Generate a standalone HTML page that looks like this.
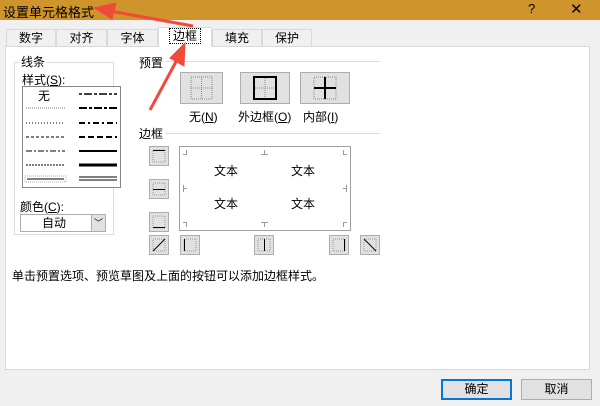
<!DOCTYPE html><html><head><meta charset="utf-8"><style>
*{margin:0;padding:0;box-sizing:border-box}
body{width:600px;height:406px;background:#f0f0f0;font-family:"Liberation Sans","Noto Sans CJK SC",sans-serif;font-size:12px;color:#000;position:relative;overflow:hidden}
.a{position:absolute}
.tab{position:absolute;top:29px;height:17px;border:1px solid #d9d9d9;border-bottom:none;background:#f0f0f0;text-align:center;line-height:16px}
.btn{position:absolute;background:#e1e1e1;border:1px solid #adadad}
.sb{position:absolute;width:20px;height:20px;background:#e1e1e1;border:1px solid #adadad}
</style></head><body>
<div class="a" style="left:0;top:0;width:600px;height:20px;background:#cf952c"></div>
<div class="a" style="left:3px;top:2px;font-size:13px">设置单元格格式</div>
<div class="a" style="left:528px;top:1px;font-size:13px">?</div>
<div class="a" style="left:570px;top:0px;font-size:15px">✕</div>
<div class="a" style="left:5px;top:46px;width:585px;height:324px;background:#fff;border:1px solid #d9d9d9"></div>
<div class="tab" style="left:6px;width:50px">数字</div>
<div class="tab" style="left:56px;width:51px">对齐</div>
<div class="tab" style="left:107px;width:51px">字体</div>
<div class="tab" style="left:158px;top:27px;height:20px;width:54px;background:#fff"><span style="border:1px dotted #000;padding:0 3px">边框</span></div>
<div class="tab" style="left:212px;width:50px">填充</div>
<div class="tab" style="left:262px;width:50px">保护</div>
<div class="a" style="left:14px;top:62px;width:100px;height:173px;border:1px solid #dcdcdc"></div>
<div class="a" style="left:20px;top:53px;background:#fff;padding:0 1px">线条</div>
<div class="a" style="left:22px;top:71px">样式(<u>S</u>):</div>
<div class="a" style="left:22px;top:86px;width:99px;height:102px;border:1px solid #828790;background:#fff"></div>
<div class="a" style="left:38px;top:87px">无</div>
<svg class="a" style="left:22px;top:86px" width="99" height="102">
<g stroke="#000">
<line x1="4" y1="22" x2="43" y2="22" stroke-dasharray="1 1" stroke="#777"/>
<line x1="4" y1="37" x2="43" y2="37" stroke-dasharray="1 2"/>
<line x1="4" y1="51" x2="43" y2="51" stroke-dasharray="3 2"/>
<line x1="4" y1="65" x2="43" y2="65" stroke-dasharray="6 2 2 2"/>
<line x1="4" y1="79" x2="43" y2="79" stroke-dasharray="2 1"/>
<rect x="3" y="90" width="41" height="6" fill="none" stroke="#aaa" stroke-dasharray="1 1"/>
<line x1="5" y1="93" x2="42" y2="93"/>
<line x1="57" y1="8" x2="95" y2="8" stroke-width="1.5" stroke-dasharray="3 2 8 2"/>
<line x1="57" y1="22" x2="95" y2="22" stroke-width="2" stroke-dasharray="8 2 3 2"/>
<line x1="57" y1="37" x2="95" y2="37" stroke-width="2" stroke-dasharray="6 3 2 3"/>
<line x1="57" y1="51" x2="95" y2="51" stroke-width="2" stroke-dasharray="6 3"/>
<line x1="57" y1="65" x2="95" y2="65" stroke-width="2"/>
<line x1="57" y1="79" x2="95" y2="79" stroke-width="3"/>
<line x1="57" y1="91" x2="95" y2="91"/><line x1="57" y1="94" x2="95" y2="94"/>
</g></svg>
<div class="a" style="left:20px;top:198px">颜色(<u>C</u>):</div>
<div class="a" style="left:20px;top:214px;width:86px;height:18px;border:1px solid #adadad;background:#fff;text-align:center;line-height:16px;padding-right:18px">自动</div>
<div class="a" style="left:91px;top:215px;width:14px;height:16px;background:#e1e1e1;border-left:1px solid #adadad;font-size:9px;text-align:center;line-height:16px">﹀</div>
<div class="a" style="left:139px;top:54px">预置</div>
<div class="a" style="left:165px;top:61px;width:215px;border-top:1px solid #dcdcdc"></div>
<div class="a" style="left:139px;top:125px">边框</div>
<div class="a" style="left:165px;top:133px;width:215px;border-top:1px solid #dcdcdc"></div>
<div class="btn" style="left:180px;top:72px;width:43px;height:32px"><svg width="41" height="30"><rect x="10" y="4" width="21" height="22" fill="none" stroke="#888" stroke-dasharray="1 1"/><line x1="20.5" y1="4" x2="20.5" y2="26" stroke="#888" stroke-dasharray="1 1"/><line x1="10" y1="15" x2="31" y2="15" stroke="#888" stroke-dasharray="1 1"/></svg></div>
<div class="btn" style="left:240px;top:72px;width:50px;height:32px"><svg width="48" height="30"><rect x="13" y="4" width="22" height="22" fill="none" stroke="#000" stroke-width="2"/><line x1="24" y1="5" x2="24" y2="25" stroke="#888" stroke-dasharray="1 1"/><line x1="14" y1="15" x2="34" y2="15" stroke="#888" stroke-dasharray="1 1"/></svg></div>
<div class="btn" style="left:300px;top:72px;width:50px;height:32px"><svg width="48" height="30"><rect x="13" y="4" width="22" height="22" fill="none" stroke="#888" stroke-dasharray="1 1"/><line x1="24" y1="4" x2="24" y2="26" stroke="#000" stroke-width="2"/><line x1="13" y1="15" x2="35" y2="15" stroke="#000" stroke-width="2"/></svg></div>
<div class="a" style="left:189px;top:108px">无(<u>N</u>)</div>
<div class="a" style="left:238px;top:108px">外边框(<u>O</u>)</div>
<div class="a" style="left:303px;top:108px">内部(<u>I</u>)</div>
<div class="a" style="left:179px;top:146px;width:172px;height:85px;border:1px solid #a0a0a0;background:#fff"></div>
<svg class="a" style="left:179px;top:146px" width="172" height="85">
<g stroke="#999" fill="none">
<path d="M7.5 4v4.5H4"/>
<path d="M85.5 4v4.5M82 8.5h7"/>
<path d="M164.5 4v4.5H168"/>
<path d="M4 42.5h4M4.5 39v7"/>
<path d="M168 42.5h-4M167.5 39v7"/>
<path d="M4 76.5h3.5V81"/>
<path d="M82 76.5h7M85.5 76.5V81"/>
<path d="M168 76.5h-3.5V81"/>
</g></svg>
<div class="a" style="left:214px;top:162px">文本</div><div class="a" style="left:291px;top:162px">文本</div>
<div class="a" style="left:214px;top:195px">文本</div><div class="a" style="left:291px;top:195px">文本</div>
<div class="sb" style="left:149px;top:146px"><svg width="18" height="18"><rect x="3" y="3" width="12" height="12" fill="none" stroke="#999" stroke-dasharray="1 1"/><line x1="3" y1="3.5" x2="15" y2="3.5" stroke="#000"/></svg></div>
<div class="sb" style="left:149px;top:179px"><svg width="18" height="18"><rect x="3" y="3" width="12" height="12" fill="none" stroke="#999" stroke-dasharray="1 1"/><line x1="3" y1="9.5" x2="15" y2="9.5" stroke="#000"/></svg></div>
<div class="sb" style="left:149px;top:212px"><svg width="18" height="18"><rect x="3" y="3" width="12" height="12" fill="none" stroke="#999" stroke-dasharray="1 1"/><line x1="3" y1="14.5" x2="15" y2="14.5" stroke="#000"/></svg></div>
<div class="sb" style="left:149px;top:235px"><svg width="18" height="18"><rect x="3" y="3" width="12" height="12" fill="none" stroke="#999" stroke-dasharray="1 1"/><line x1="3" y1="15" x2="15" y2="3" stroke="#000"/></svg></div>
<div class="sb" style="left:180px;top:235px"><svg width="18" height="18"><rect x="3" y="3" width="12" height="12" fill="none" stroke="#999" stroke-dasharray="1 1"/><line x1="3.5" y1="3" x2="3.5" y2="15" stroke="#000"/></svg></div>
<div class="sb" style="left:254px;top:235px"><svg width="18" height="18"><rect x="3" y="3" width="12" height="12" fill="none" stroke="#999" stroke-dasharray="1 1"/><line x1="9.5" y1="3" x2="9.5" y2="15" stroke="#000"/></svg></div>
<div class="sb" style="left:329px;top:235px"><svg width="18" height="18"><rect x="3" y="3" width="12" height="12" fill="none" stroke="#999" stroke-dasharray="1 1"/><line x1="14.5" y1="3" x2="14.5" y2="15" stroke="#000"/></svg></div>
<div class="sb" style="left:360px;top:235px"><svg width="18" height="18"><rect x="3" y="3" width="12" height="12" fill="none" stroke="#999" stroke-dasharray="1 1"/><line x1="3" y1="3" x2="15" y2="15" stroke="#000"/></svg></div>
<div class="a" style="left:12px;top:267px">单击预置选项、预览草图及上面的按钮可以添加边框样式。</div>
<div class="btn" style="left:441px;top:379px;width:71px;height:21px;border:2px solid #0078d7;text-align:center;line-height:17px">确定</div>
<div class="btn" style="left:521px;top:379px;width:71px;height:21px;text-align:center;line-height:19px">取消</div>
<svg class="a" style="left:0;top:0" width="600" height="406">
<g fill="#f04a3a" stroke="#f04a3a">
<line x1="193" y1="26" x2="110" y2="11" stroke-width="3"/>
<polygon points="94,8 116,3 112,19"/>
<line x1="150" y1="110" x2="178" y2="58" stroke-width="3"/>
<polygon points="185,43 184,66 170,58"/>
</g></svg>
</body></html>
